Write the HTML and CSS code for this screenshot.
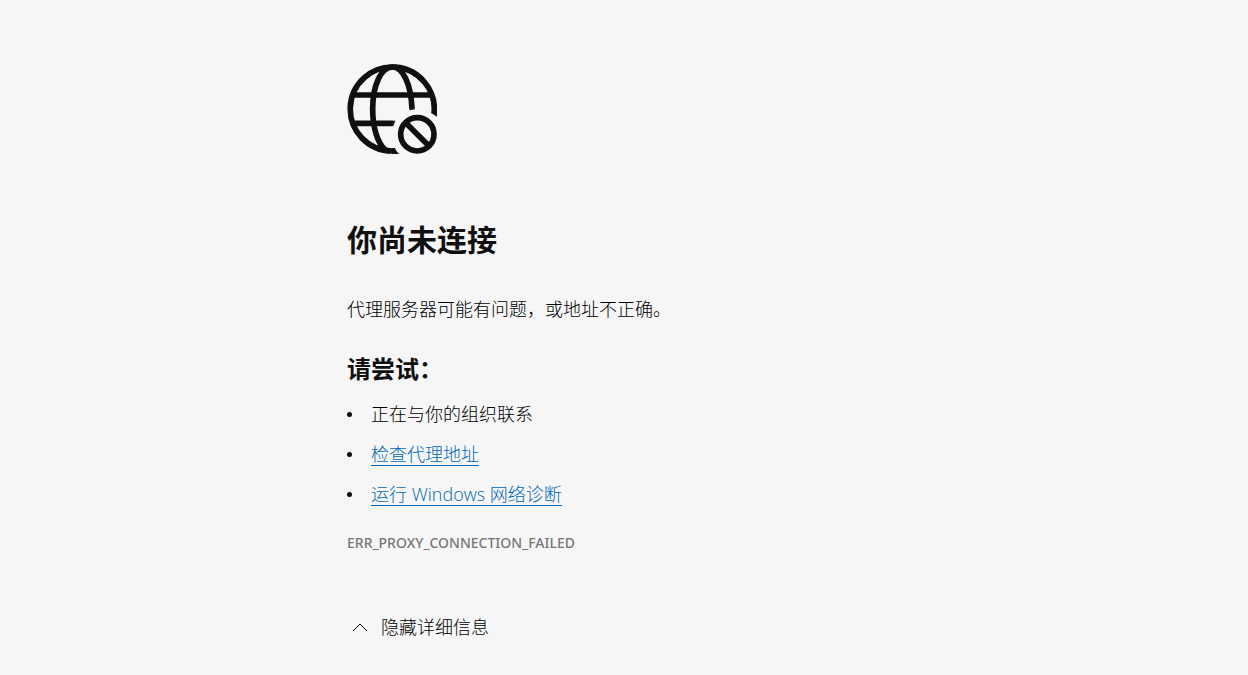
FILE: index.html
```html
<!DOCTYPE html>
<html lang="zh-CN">
<head>
<meta charset="utf-8">
<meta name="viewport" content="width=device-width, initial-scale=1">
<title>你尚未连接</title>
<link rel="stylesheet" href="styles.css">
</head>
<body>
<main class="page">
  <svg class="globe" viewBox="21 23 270 270" fill="none" stroke="currentColor" stroke-width="17" aria-hidden="true">
    <path d="M282 172A126 126 0 1 0 156 284L165 284"/>
    <path d="M216 157C213 82 188 32 157 32C123 32 98 88 98 158C98 215 113 263 138 283"/>
    <path d="M37 116H276M37 201H158"/>
    <path d="M154 193H166L160 209H154ZM208 156H225V159L208 162ZM273 170L291 169V181L274 170ZM156 276L165 276Q169 286 177 293H156Z" fill="currentColor" stroke="none"/>
    <circle cx="232" cy="234" r="50"/>
    <path d="M197 199L267 269"/>
  </svg>
  <h1 class="title">你尚未连接</h1>
  <p class="summary">代理服务器可能有问题，或地址不正确。</p>
  <h2 class="subtitle">请尝试：</h2>
  <ul class="tips">
    <li class="tip">正在与你的组织联系</li>
    <li class="tip"><a class="link" href="#proxy">检查代理地址</a></li>
    <li class="tip"><a class="link" href="#diagnose">运行 Windows 网络诊断</a></li>
  </ul>
  <p class="code">ERR_PROXY_CONNECTION_FAILED</p>
  <button class="toggle" type="button" aria-expanded="true">
    <svg class="chevron" viewBox="0 0 16 16" fill="none" stroke="currentColor" aria-hidden="true"><path d="M1 12L8 5L15 12"/></svg>
    <span>隐藏详细信息</span>
  </button>
</main>
</body>
</html>
```
FILE: styles.css
```css
* {
  box-sizing: border-box;
}

body {
  margin: 0;
  background: #f6f6f6;
  color: #101010;
  font-family: "Open Sans", "Noto Sans CJK SC", sans-serif;
  font-size: 18px;
  font-weight: 300;
  line-height: 24px;
}

.page {
  max-width: 554px;
  margin: 0 auto;
  padding: 64px 0 32px;
}

.globe {
  display: block;
  width: 90px;
  height: 90px;
}

.title {
  margin: 66px 0 0;
  font-size: 30px;
  font-weight: 700;
  line-height: 40px;
}

.summary {
  margin: 37px 0 0;
  color: #000;
}

.subtitle {
  margin: 32px 0 0;
  font-size: 24px;
  font-weight: 700;
  line-height: 32px;
}

.tips {
  display: grid;
  gap: 16px;
  margin: 17px 0 0;
  padding: 0;
  color: #000;
  list-style: none;
}

.tip {
  display: flex;
  align-items: center;
  min-height: 24px;
}

.tip::before {
  content: "";
  width: 5px;
  height: 5px;
  margin: 0 19px 0 0;
  border-radius: 50%;
  background: #101010;
}

.link {
  color: #0067b8;
  line-height: 22px;
  text-decoration: none;
  border-bottom: 1px solid #0067b8;
}

.code {
  margin: 25px 0 0;
  color: #767676;
  font-family: "Noto Sans", "Open Sans", sans-serif;
  font-size: 14px;
  font-weight: 500;
}

.toggle {
  display: flex;
  align-items: center;
  gap: 13px;
  margin: 60px 0 0;
  padding: 0 5px;
  border: 0;
  background: none;
  color: #000;
  font: inherit;
}

.chevron {
  width: 16px;
  height: 16px;
}
```
